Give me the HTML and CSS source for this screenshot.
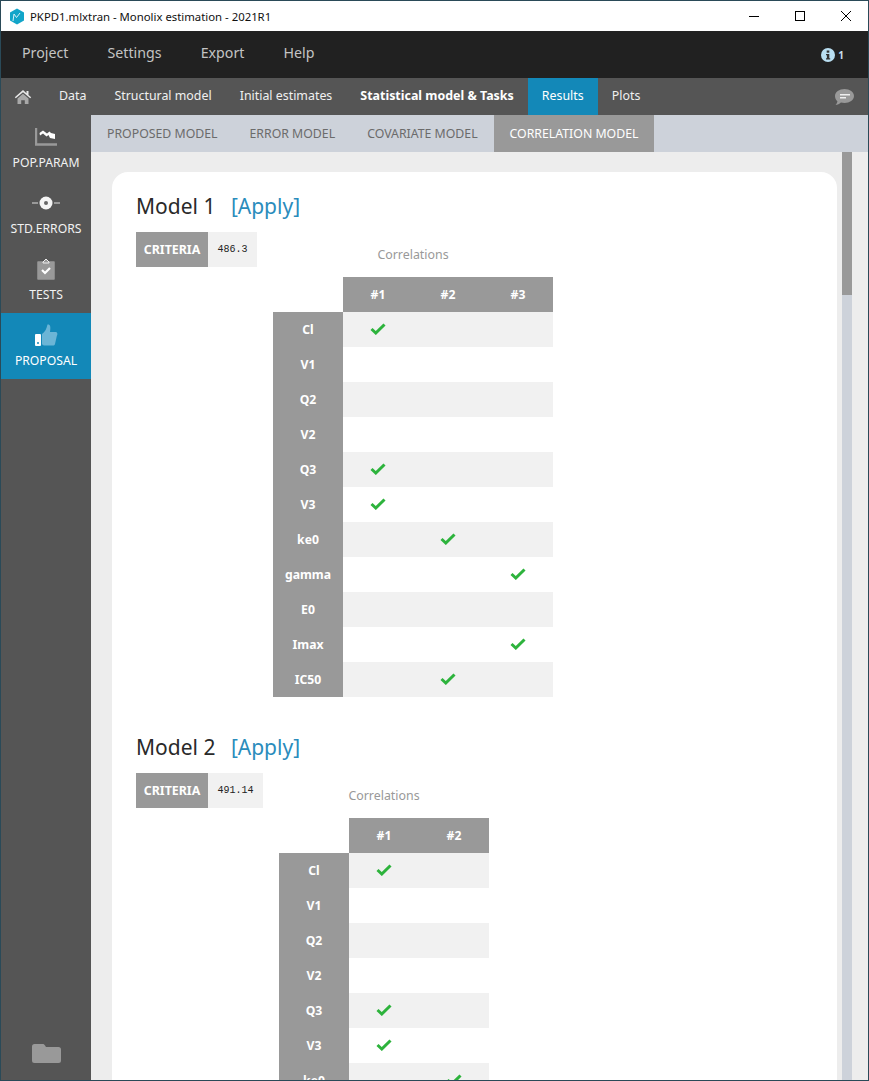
FILE: index.html
```html
<!DOCTYPE html>
<html lang="en">
<head>
<meta charset="utf-8">
<title>PKPD1.mlxtran - Monolix estimation - 2021R1</title>
<link rel="stylesheet" href="styles.css">
</head>
<body>
<div class="window">
  <header class="titlebar">
    <svg class="app-logo" width="16" height="17" viewBox="0 0 16 17"><path d="M8 .5l7 4v8l-7 4-7-4v-8z" fill="#12a5c9"/><path d="M4 13l1-7 2.500 3.500L11 5" fill="none" stroke="#d5f0f6" stroke-width="1"/></svg>
    <span class="title-text">PKPD1.mlxtran - Monolix estimation - 2021R1</span>
    <div class="win-controls">
      <svg width="46" height="30" viewBox="0 0 46 30"><path d="M18 15.500h10" stroke="#000" stroke-width="1"/></svg>
      <svg width="46" height="30" viewBox="0 0 46 30"><rect x="18.500" y="10.500" width="9" height="9" fill="none" stroke="#000"/></svg>
      <svg width="46" height="30" viewBox="0 0 46 30"><path d="M18 10l10 10M28 10L18 20" stroke="#000" stroke-width="1"/></svg>
    </div>
  </header>
  <nav class="menubar">
    <a class="menu-item">Project</a>
    <a class="menu-item">Settings</a>
    <a class="menu-item">Export</a>
    <a class="menu-item">Help</a>
    <div class="info-badge">
      <svg width="14" height="14" viewBox="0 0 14 14"><circle cx="7" cy="7" r="7" fill="#b9dff2"/><rect x="5.700" y="2.500" width="2.600" height="2.200" fill="#333"/><path d="M5 6h3.300v4.200H9.200v1.300H5v-1.300h.9V7.300H5z" fill="#333"/></svg>
      <span>1</span>
    </div>
  </nav>
  <nav class="tabsbar">
    <svg class="home" width="18" height="16" viewBox="0 0 18 16"><path d="M9 1L.8 8.200l1 1L9 3.200l7.200 6 1-1L14.500 6V2h-2v2.300z" fill="#e8e8e8"/><path d="M3.500 9.500L9 4.800l5.500 4.700V15h-3.700v-3.800H7.200V15H3.500z" fill="#a8a8a8"/></svg>
    <a class="tab t-data">Data</a>
    <a class="tab">Structural model</a>
    <a class="tab">Initial estimates</a>
    <a class="tab tab-bold">Statistical model &amp; Tasks</a>
    <a class="tab tab-active">Results</a>
    <a class="tab">Plots</a>
    <svg class="chat" width="21" height="18" viewBox="0 0 21 18"><path d="M10.500 1C15.700 1 20 3.900 20 8s-4.300 7-9.500 7c-1.300 0-2.500-.2-3.600-.5C5.500 15.700 3.500 17 1.500 17c1-1 1.800-2.300 1.900-3.800C1.900 11.900 1 10.100 1 8c0-4.100 4.300-7 9.500-7z" fill="#999"/><rect x="6" y="6" width="10" height="1.500" fill="#eee"/><rect x="6" y="9" width="6" height="1.500" fill="#eee"/></svg>
  </nav>
  <div class="body-row">
    <aside class="sidebar">
      <a class="side-item">
        <svg width="22" height="18" viewBox="0 0 22 18"><path d="M1 0v16.500h21" fill="none" stroke="#999" stroke-width="2.400"/><path d="M4.500 5L8 2.500l4 3 2.500-2L16 5l4 1v5l-5-1-1.500-3-2 1.500-3.500-3-3 2z" fill="#fff"/></svg>
        <span>POP.PARAM</span>
      </a>
      <a class="side-item">
        <svg width="28" height="14" viewBox="0 0 28 14"><path d="M0 7h6M22 7h6" stroke="#999" stroke-width="2"/><circle cx="14" cy="7" r="6.500" fill="#f4f4f4"/><circle cx="14" cy="7" r="2" fill="#666"/></svg>
        <span>STD.ERRORS</span>
      </a>
      <a class="side-item">
        <svg width="18" height="22" viewBox="0 0 18 22"><path d="M1 4h16v17H1z" fill="#999" stroke="#999" stroke-width="1.500" stroke-linejoin="round"/><path d="M6 4l3-3 3 3v1H6z" fill="#999" stroke="#eee" stroke-width="1"/><path d="M5 12l3 3 5-5" fill="none" stroke="#fff" stroke-width="2.200"/></svg>
        <span>TESTS</span>
      </a>
      <a class="side-item side-active">
        <svg width="24" height="24" viewBox="0 0 24 24"><rect x="1" y="11" width="6" height="12" rx="1" fill="#fff"/><circle cx="4" cy="20" r="1" fill="#1388b8"/><path d="M8 11c3-2 4.500-5 5.500-9.500 2.500-.5 3.500 1.500 2.500 7.500h6c1.500 0 1.800 2.500.8 4l-1.800 8c-.3 1-1 1.500-2 1.500H11c-1.500 0-3-.7-3-1.500z" fill="#6bb5d6"/></svg>
        <span>PROPOSAL</span>
      </a>
      <svg class="folder" width="29" height="21" viewBox="0 0 29 20"><path d="M0 3a2.500 2.500 0 0 1 2.500-2.500h8c1.500 0 2 .7 2.500 1.500l1 1.500h12.500A2.500 2.500 0 0 1 29 6v11a2.500 2.500 0 0 1-2.500 2.500h-24A2.500 2.500 0 0 1 0 17z" fill="#999"/></svg>
    </aside>
    <main class="main">
      <div class="subtabs">
        <a class="subtab">PROPOSED MODEL</a>
        <a class="subtab">ERROR MODEL</a>
        <a class="subtab">COVARIATE MODEL</a>
        <a class="subtab subtab-active">CORRELATION MODEL</a>
      </div>
      <div class="content-row">
        <div class="scroller">
          <section class="card">
            <div class="model">
              <h2 class="model-title">Model 1 <a class="apply">[Apply]</a></h2>
              <div class="model-body">
                <div class="criteria"><span class="crit-label">CRITERIA</span><span class="crit-value">486.3</span></div>
                <div class="corr">
                  <div class="corr-title">Correlations</div>
                  <table class="corr-table">
                    <thead><tr><th class="blank"></th><th>#1</th><th>#2</th><th>#3</th></tr></thead>
                    <tbody>
                      <tr><th>Cl</th><td><svg class="check" width="16" height="12" viewBox="0 0 16 12"><path d="M1.500 6l4.300 4L14.500 1.500" fill="none" stroke="#2db33c" stroke-width="3"/></svg></td><td></td><td></td></tr>
                      <tr><th>V1</th><td></td><td></td><td></td></tr>
                      <tr><th>Q2</th><td></td><td></td><td></td></tr>
                      <tr><th>V2</th><td></td><td></td><td></td></tr>
                      <tr><th>Q3</th><td><svg class="check" width="16" height="12" viewBox="0 0 16 12"><path d="M1.500 6l4.300 4L14.500 1.500" fill="none" stroke="#2db33c" stroke-width="3"/></svg></td><td></td><td></td></tr>
                      <tr><th>V3</th><td><svg class="check" width="16" height="12" viewBox="0 0 16 12"><path d="M1.500 6l4.300 4L14.500 1.500" fill="none" stroke="#2db33c" stroke-width="3"/></svg></td><td></td><td></td></tr>
                      <tr><th>ke0</th><td></td><td><svg class="check" width="16" height="12" viewBox="0 0 16 12"><path d="M1.500 6l4.300 4L14.500 1.500" fill="none" stroke="#2db33c" stroke-width="3"/></svg></td><td></td></tr>
                      <tr><th>gamma</th><td></td><td></td><td><svg class="check" width="16" height="12" viewBox="0 0 16 12"><path d="M1.500 6l4.300 4L14.500 1.500" fill="none" stroke="#2db33c" stroke-width="3"/></svg></td></tr>
                      <tr><th>E0</th><td></td><td></td><td></td></tr>
                      <tr><th>Imax</th><td></td><td></td><td><svg class="check" width="16" height="12" viewBox="0 0 16 12"><path d="M1.500 6l4.300 4L14.500 1.500" fill="none" stroke="#2db33c" stroke-width="3"/></svg></td></tr>
                      <tr><th>IC50</th><td></td><td><svg class="check" width="16" height="12" viewBox="0 0 16 12"><path d="M1.500 6l4.300 4L14.500 1.500" fill="none" stroke="#2db33c" stroke-width="3"/></svg></td><td></td></tr>
                    </tbody>
                  </table>
                </div>
              </div>
            </div>
            <div class="model">
              <h2 class="model-title">Model 2 <a class="apply">[Apply]</a></h2>
              <div class="model-body">
                <div class="criteria"><span class="crit-label">CRITERIA</span><span class="crit-value">491.14</span></div>
                <div class="corr">
                  <div class="corr-title">Correlations</div>
                  <table class="corr-table">
                    <thead><tr><th class="blank"></th><th>#1</th><th>#2</th></tr></thead>
                    <tbody>
                      <tr><th>Cl</th><td><svg class="check" width="16" height="12" viewBox="0 0 16 12"><path d="M1.500 6l4.300 4L14.500 1.500" fill="none" stroke="#2db33c" stroke-width="3"/></svg></td><td></td></tr>
                      <tr><th>V1</th><td></td><td></td></tr>
                      <tr><th>Q2</th><td></td><td></td></tr>
                      <tr><th>V2</th><td></td><td></td></tr>
                      <tr><th>Q3</th><td><svg class="check" width="16" height="12" viewBox="0 0 16 12"><path d="M1.500 6l4.300 4L14.500 1.500" fill="none" stroke="#2db33c" stroke-width="3"/></svg></td><td></td></tr>
                      <tr><th>V3</th><td><svg class="check" width="16" height="12" viewBox="0 0 16 12"><path d="M1.500 6l4.300 4L14.500 1.500" fill="none" stroke="#2db33c" stroke-width="3"/></svg></td><td></td></tr>
                      <tr><th>ke0</th><td></td><td><svg class="check" width="16" height="12" viewBox="0 0 16 12"><path d="M1.500 6l4.300 4L14.500 1.500" fill="none" stroke="#2db33c" stroke-width="3"/></svg></td></tr>
                    </tbody>
                  </table>
                </div>
              </div>
            </div>
          </section>
        </div>
        <div class="scrollbar"><div class="thumb"></div></div>
      </div>
    </main>
  </div>
</div>
</body>
</html>
```
FILE: styles.css
```css
* { box-sizing: border-box; }
html, body { margin: 0; height: 100%; overflow: hidden; }
body { font-family: "Noto Sans", "Open Sans", sans-serif; background: #555; }
a { cursor: default; }
.window {
  height: 1081px;
  width: 869px;
  display: flex;
  flex-direction: column;
  border: 1px solid #2a4a58;
  overflow: hidden;
}
.titlebar {
  flex: 0 0 30px;
  background: #fff;
  display: flex;
  align-items: center;
  padding-left: 8px;
}
.app-logo { margin-right: 5px; }
.title-text { font-size: 11.350px; color: #111; }
.win-controls { margin-left: auto; display: flex; margin-right: -1px; }
.menubar {
  flex: 0 0 47px;
  background: #212121;
  display: flex;
  align-items: center;
  padding: 0 24px 4px 21px;
}
.menu-item { font-size: 14.200px; color: #c4c4c4; margin-right: 39.200px; }
.info-badge { margin-left: auto; display: flex; align-items: center; gap: 3px; color: #c8dfec; font-size: 10px; font-weight: 700; padding-top: 4px; }
.tabsbar {
  flex: 0 0 37px;
  background: #555;
  display: flex;
  align-items: center;
  color: #eee;
}
.home { margin-left: 13px; margin-right: 13px; }
.tab { font-size: 12.400px; color: #f0f0f0; padding: 0 14px; height: 37px; line-height: 36px; }
.t-data { padding-left: 14px; }
.tab-bold { font-weight: 700; color: #fff; font-size: 12.450px; }
.tab-active { background: #1388b8; color: #fff; }
.chat { margin-left: auto; margin-right: 13px; }
.body-row { flex: 1; display: flex; min-height: 0; }
.sidebar {
  flex: 0 0 90px;
  background: #555;
  display: flex;
  flex-direction: column;
}
.side-item {
  height: 66px;
  display: grid;
  grid-template-rows: 24px auto;
  align-content: start;
  justify-items: center;
  align-items: center;
  row-gap: 5px;
  padding-top: 10px;
  color: #f2f2f2;
  font-size: 12.200px;
}
.side-active { background: #1388b8; color: #fff; }
.folder { margin-top: auto; margin-bottom: 16px; margin-left: 31px; }
.main { flex: 1; display: flex; flex-direction: column; min-width: 0; background: #ededed; }
.subtabs { flex: 0 0 37px; background: #cdd2da; display: flex; }
.subtab { font-size: 12.300px; color: #6b6b6b; padding: 0 16px; line-height: 37px; }
.subtab-active { background: #999; color: #fff; }
.content-row { flex: 1; display: flex; min-height: 0; }
.scroller { flex: 1; overflow: hidden; padding: 20px 5px 0 21px; }
.scrollbar { flex: 0 0 10px; background: #cdd2da; margin-right: 16px; }
.thumb { height: 143px; background: #999; }
.card { background: #fff; border-radius: 16px 16px 0 0; padding: 18px 24px 0; min-height: 1000px; }
.model { margin-bottom: 34px; }
.model-title { font-size: 21px; font-weight: 400; color: #2a2a2a; margin: 0 0 10px; line-height: 32px; height: 32px; }
.apply { color: #2a8cbc; margin-left: 10px; }
.model-body { display: flex; align-items: flex-start; }
.criteria { display: flex; height: 35px; align-items: stretch; }
.crit-label { width: 72px; background: #999; color: #fff; font-size: 12.400px; font-weight: 700; line-height: 35px; text-align: center; }
.crit-value { background: #f1f1f1; color: #222; font-family: "Liberation Mono", monospace; font-size: 10px; line-height: 35px; padding: 0 9.500px; }
.corr { margin-left: 16px; }
.corr-title { text-align: center; font-size: 12.400px; color: #999; height: 45px; line-height: 45px; }
.corr-table { border-collapse: collapse; table-layout: fixed; }
.corr-table th, .corr-table td { width: 70px; height: 35px; padding: 0; text-align: center; vertical-align: middle; }
.corr-table th { background: #999; color: #fff; font-size: 12.200px; font-weight: 700; }
.corr-table th.blank { background: #fff; }
.corr-table tbody tr:nth-child(odd) td { background: #f1f1f1; }
.check { display: block; margin: -2px auto 0; }
```
